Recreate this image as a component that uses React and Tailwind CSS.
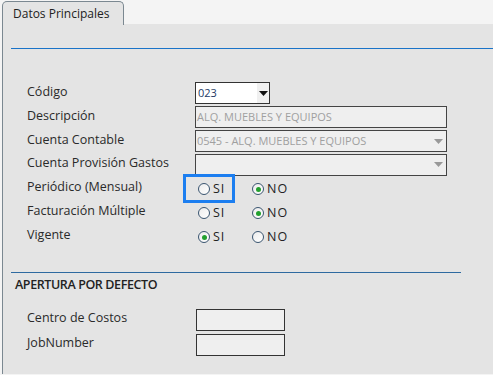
import React from "react";

const font = { fontFamily: '"Open Sans", "Liberation Sans", sans-serif' };

function Radio({ checked, label }) {
  return (
    <div className="flex items-center h-[16px]">
      <span className="relative w-[12px] h-[12px] rounded-full border border-[#3a5570] bg-gradient-to-br from-[#ececec] to-white flex items-center justify-center">
        {checked && <span className="w-[5px] h-[5px] rounded-full bg-[#22a02e]" />}
      </span>
      <span className="ml-[3px] text-[12.5px] text-[#222] tracking-[1px]">{label}</span>
    </div>
  );
}

function Arrow({ color }) {
  return (
    <svg width="9" height="5" viewBox="0 0 9 5">
      <path d="M0 0 L9 0 L4.5 5 Z" fill={color} />
    </svg>
  );
}

function Label({ children }) {
  return <div className="w-[168px] pb-[2px] text-[12.5px] text-[#2a2a2a] whitespace-nowrap">{children}</div>;
}

export default function App() {
  return (
    <div className="w-[493px] h-[375px] bg-[#f4f4f4] overflow-hidden relative" style={font}>
      <div className="flex h-[25px]">
        <div className="ml-[2px] mt-[1px] w-[122px] h-[24px] bg-[#e4e4e4] border-t border-l border-r border-[#7b8891] rounded-t-[5px] relative z-10">
          <span className="absolute left-[10px] top-[3px] text-[12px] text-[#222]">Datos Principales</span>
        </div>
        <div className="flex-1 border-b border-[#7b8891]" />
      </div>
      <div className="ml-[2px] h-[350px] bg-[#e4e4e4] border-l border-[#7b8891] -mt-px relative">
        <div className="pt-[24px] pl-[8px]">
          <div className="h-px bg-[#1a73c8]" />
        </div>
        <div className="pl-[24px] pt-[32px]">
          <div className="flex items-center h-[24px]">
            <Label>Código</Label>
            <div className="w-[75px] h-[22px] bg-white border border-[#333] flex items-center">
              <span className="flex-1 pl-[2px] text-[11px] text-[#233a66]">023</span>
              <span className="w-[12px] h-full bg-[#f0f0f0] flex items-center justify-center"><Arrow color="#111" /></span>
            </div>
          </div>
          <div className="flex items-center h-[24px]">
            <Label>Descripción</Label>
            <div className="w-[252px] h-[22px] bg-[#efefef] border border-[#444] flex items-center pl-[1px] text-[11px] text-[#a0a0a0]">ALQ. MUEBLES Y EQUIPOS</div>
          </div>
          <div className="flex items-center h-[24px]">
            <Label>Cuenta Contable</Label>
            <div className="w-[252px] h-[22px] bg-[#efefef] border border-[#444] flex items-center pl-[1px] text-[11px] text-[#a0a0a0]">
              <span className="flex-1">0545 - ALQ. MUEBLES Y EQUIPOS</span>
              <span className="mr-[3px]"><Arrow color="#999" /></span>
            </div>
          </div>
          <div className="flex items-center h-[23px]">
            <Label>Cuenta Provisión Gastos</Label>
            <div className="w-[252px] h-[22px] bg-[#efefef] border border-[#444] flex items-center justify-end">
              <span className="mr-[3px]"><Arrow color="#999" /></span>
            </div>
          </div>
          <div className="flex items-center h-[24px]">
            <Label>Periódico (Mensual)</Label>
            <div className="flex items-center pl-[3px] pt-[2px]">
              <div className="relative w-[54px]">
                <div className="absolute -left-[15px] -top-[7px] w-[52px] h-[29px] border-[3px] border-[#1c7ef0]" />
                <Radio label="SI" />
              </div>
              <Radio checked label="NO" />
            </div>
          </div>
          <div className="flex items-center h-[24px]">
            <Label>Facturación Múltiple</Label>
            <div className="flex items-center pl-[3px] pt-[2px]">
              <div className="w-[54px]"><Radio label="SI" /></div>
              <Radio checked label="NO" />
            </div>
          </div>
          <div className="flex items-center h-[24px]">
            <Label>Vigente</Label>
            <div className="flex items-center pl-[3px] pt-[2px]">
              <div className="w-[54px]"><Radio checked label="SI" /></div>
              <Radio label="NO" />
            </div>
          </div>
        </div>
        <div className="mt-[24px] ml-[8px] w-[450px] h-px bg-[#2e6aa0]" />
        <div className="pl-[12px] pt-[3px] text-[12.5px] font-semibold text-[#222] tracking-[-0.4px]">APERTURA POR DEFECTO</div>
        <div className="pl-[24px] pt-[13px]">
          <div className="flex items-center h-[25px]">
            <div className="w-[169px] pb-[3px] text-[12.5px] text-[#2a2a2a]">Centro de Costos</div>
            <div className="w-[89px] h-[22px] bg-[#efefef] border border-[#333]" />
          </div>
          <div className="flex items-center h-[24px]">
            <div className="w-[169px] pb-[3px] text-[12.5px] text-[#2a2a2a]">JobNumber</div>
            <div className="w-[89px] h-[22px] bg-[#efefef] border border-[#333]" />
          </div>
        </div>
      </div>
    </div>
  );
}
